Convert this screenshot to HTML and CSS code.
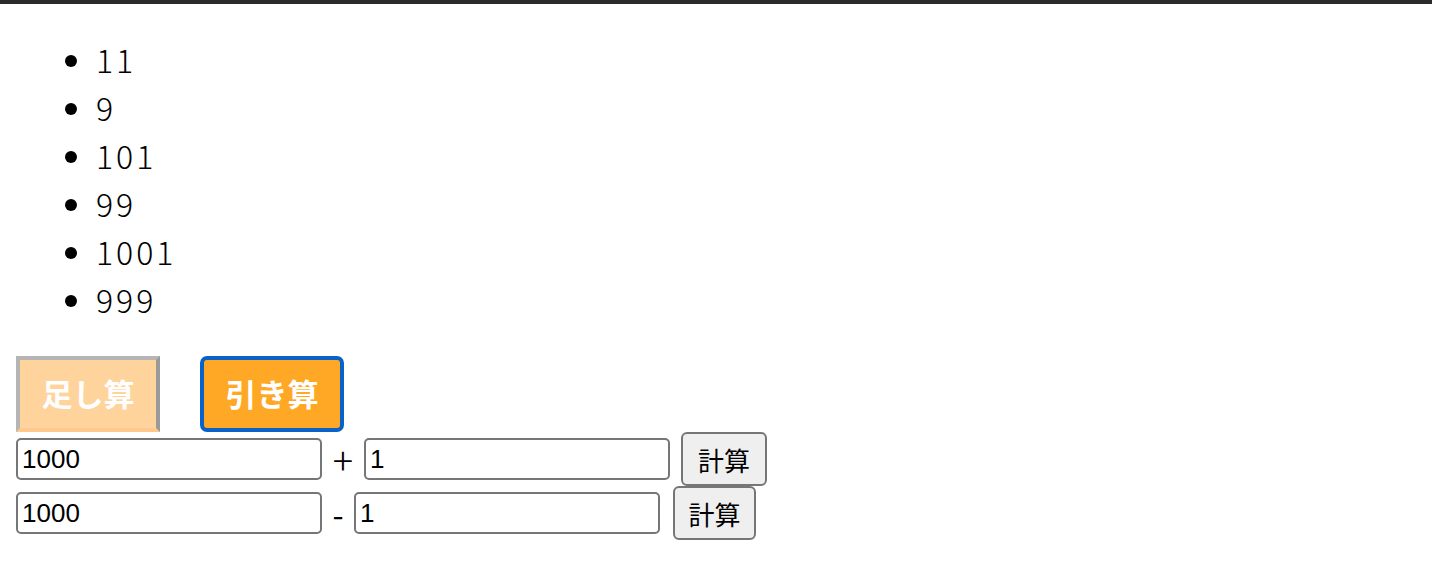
FILE: index.html
```html
<!DOCTYPE html>
<html lang="ja">
<head>
<meta charset="utf-8">
<title>計算</title>
<link rel="stylesheet" href="styles.css">
</head>
<body>
<div class="page">
  <ul class="results">
    <li>11</li>
    <li>9</li>
    <li>101</li>
    <li>99</li>
    <li>1001</li>
    <li>999</li>
  </ul>
  <div class="modes">
    <button class="mode mode-off">足し算</button>
    <button class="mode mode-on">引き算</button>
  </div>
  <div class="calc-row">
    <input class="num" type="text" value="1000">
    <span class="op op-plus">+</span>
    <input class="num" type="text" value="1">
    <button class="calc-btn">計算</button>
  </div>
  <div class="calc-row">
    <input class="num" type="text" value="1000">
    <span class="op op-minus">-</span>
    <input class="num" type="text" value="1">
    <button class="calc-btn calc-btn-2">計算</button>
  </div>
</div>
</body>
</html>
```
FILE: styles.css
```css
html, body {
  margin: 0;
  padding: 0;
  background: #ffffff;
}
body {
  border-top: 4px solid #2b2b2b;
  font-family: "Noto Sans CJK JP", "Noto Sans", sans-serif;
  color: #000;
}
.page {
  padding: 0 16px;
}
.results {
  margin: 32px 0;
  padding-left: 80px;
  font-size: 32px;
  line-height: 46px;
  font-weight: 300;
  letter-spacing: 3px;
}
.results li {
  height: 48px;
}
.modes {
  display: flex;
  gap: 40px;
  height: 76px;
}
.mode {
  width: 144px;
  height: 76px;
  box-sizing: border-box;
  font-family: "Noto Sans CJK JP", sans-serif;
  font-weight: 700;
  font-size: 31px;
  line-height: 64px;
  color: #ffffff;
  padding: 0 0 2px;
  margin: 0;
}
.mode-off {
  background: #ffd39c;
  border-style: solid;
  border-width: 4px;
  border-color: #b5b5b5 #9a9a9a #ffc88e #b5b5b5;
}
.mode-on {
  background: #ffa826;
  border: 4px solid #0a62c9;
  border-radius: 7px;
}
.calc-row {
  display: flex;
  align-items: center;
  height: 54px;
}
.num {
  width: 306px;
  height: 42px;
  box-sizing: border-box;
  border: 2px solid #767676;
  border-radius: 5px;
  padding: 0 4px;
  margin: 0;
  font-family: "Liberation Sans", Arial, sans-serif;
  font-size: 26px;
  color: #000;
}
.op {
  font-family: "Noto Sans CJK JP", sans-serif;
  line-height: 42px;
  text-align: center;
}
.op-plus {
  width: 42px;
  font-size: 38px;
  font-weight: 300;
}
.op-minus {
  width: 32px;
  font-size: 32px;
}
.calc-btn {
  margin-left: 11px;
  width: 86px;
  height: 54px;
  box-sizing: border-box;
  background: #efefef;
  border: 2px solid #767676;
  border-radius: 6px;
  font-family: "Noto Sans CJK JP", sans-serif;
  font-size: 26px;
  color: #000;
  padding: 0;
}
.calc-btn-2 {
  margin-left: 13px;
  width: 83px;
}
```
